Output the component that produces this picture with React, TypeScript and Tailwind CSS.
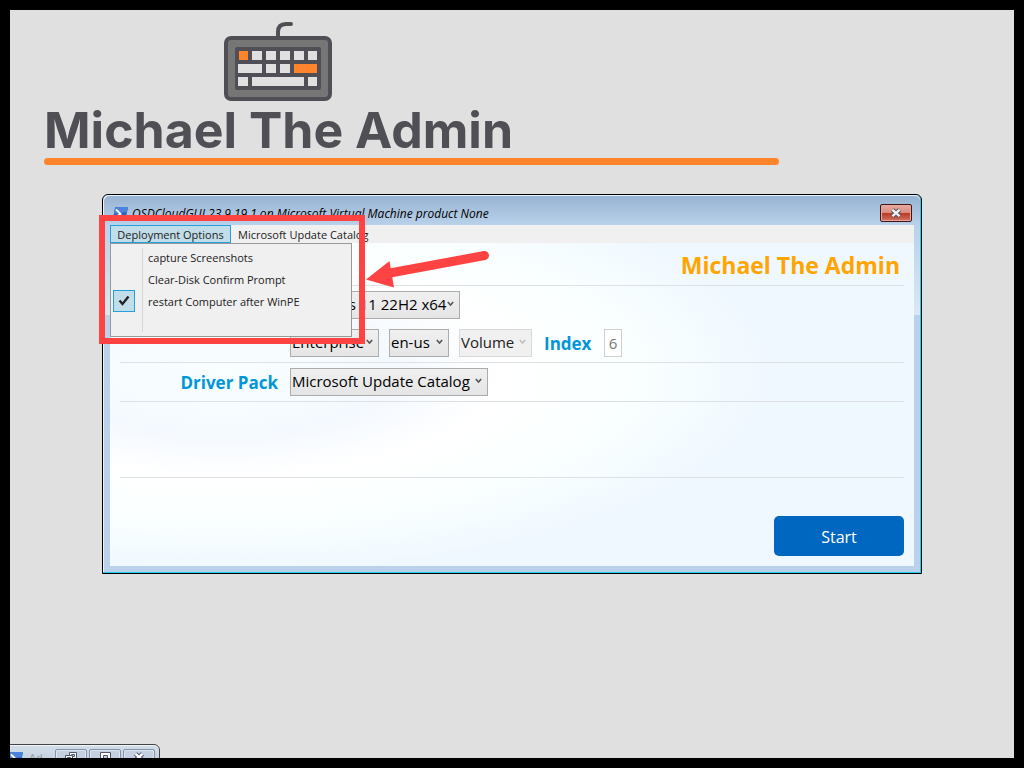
import type { ReactNode, SelectHTMLAttributes } from "react";

function KeyboardLogo() {
  const keys = [
    [239, 51, 9, true],
    [252, 51, 10, false],
    [266, 51, 10, false],
    [280, 51, 10, false],
    [294, 51, 10, false],
    [308, 51, 9, false],
    [238, 64, 24, false],
    [266, 64, 10, false],
    [280, 64, 10, false],
    [294, 64, 23, true],
    [238, 77, 10, false],
    [252, 77, 52, false],
    [308, 77, 9, false],
  ] as const;
  return (
    <svg width="110" height="80" viewBox="223 22 110 80" aria-hidden="true">
      <path d="M278 37v-5q0-8 8-8h5" fill="none" stroke="#504f55" strokeWidth="4" strokeLinecap="round" />
      <rect x="226" y="38" width="104" height="61" rx="5" fill="#767676" stroke="#504f55" strokeWidth="4" />
      <rect x="235" y="47" width="86" height="43" rx="2" fill="#504f55" />
      {keys.map(([x, y, w, accent]) => (
        <rect key={`${x}-${y}`} x={x} y={y} width={w} height="9" fill={accent ? "#ff842c" : "#e0e0e0"} />
      ))}
    </svg>
  );
}

function PowerShellIcon() {
  return (
    <svg className="shrink-0" width="16" height="14" viewBox="0 0 16 14" aria-hidden="true">
      <path d="M3.2 0H16l-2.8 14H.4z" fill="#2f62c0" />
      <path d="M3.2 0H16l-1 5L1.8 7z" fill="#4b82dc" />
      <path d="M4 2.5l4.5 4.3-6 4.4" fill="none" stroke="#fff" strokeWidth="1.8" />
      <path d="M8 11h4" stroke="#fff" strokeWidth="1.5" />
    </svg>
  );
}

type SelectProps = SelectHTMLAttributes<HTMLSelectElement> & { label: string; value: string; width: string };

function Select({ label, value, width, disabled, id }: SelectProps) {
  return (
    <div className={`relative h-7 ${width}`}>
      <select
        id={id}
        aria-label={label}
        disabled={disabled}
        defaultValue={value}
        className="h-full w-full appearance-none border border-[#acacac] bg-linear-to-b from-[#f0f0f0] to-[#e5e5e5] pb-0.5 pl-px text-[15px] leading-5 text-black disabled:border-[#d9d9d9] disabled:bg-[#f0f0f0] disabled:bg-none disabled:text-[#222] disabled:opacity-100"
      >
        <option>{value}</option>
      </select>
      <svg
        className={`pointer-events-none absolute top-2.5 right-1.5 ${disabled ? "text-[#bfbfbf]" : "text-[#555]"}`}
        width="7"
        height="6"
        viewBox="0 0 7 6"
        aria-hidden="true"
      >
        <path d="M.8 1l2.7 3L6.2 1" fill="none" stroke="currentColor" strokeWidth="1.6" />
      </svg>
    </div>
  );
}

function Row({ children, className }: { children?: ReactNode; className: string }) {
  return <div className={`border-b border-[#dfe1e4] ${className}`}>{children}</div>;
}

function MenuItem({ children, checked = false }: { children: ReactNode; checked?: boolean }) {
  return (
    <button type="button" role="menuitemcheckbox" aria-checked={checked} className="flex h-[22px] w-full items-center text-left">
      <span className="flex w-[37px] shrink-0 pl-0.5">
        {checked && (
          <span className="flex size-[22px] items-center justify-center border border-[#26a0da] bg-[#c0dde9]">
            <svg width="12" height="12" viewBox="0 0 12 12" aria-hidden="true">
              <path d="M1.5 5.5l3 3.5L10.5 1.5" fill="none" stroke="#212121" strokeWidth="2.3" />
            </svg>
          </span>
        )}
      </span>
      <span className="pt-0.5">{children}</span>
    </button>
  );
}

function OptionsMenu() {
  return (
    <div role="menu" className="absolute top-full left-0 z-10 flex h-[94px] w-[242px] flex-col border border-[#999] bg-[#f0f0f0] py-0.5">
      <span className="absolute top-1 bottom-1 left-[31px] w-px bg-[#d7d7d7]" />
      <MenuItem>capture Screenshots</MenuItem>
      <MenuItem>Clear-Disk Confirm Prompt</MenuItem>
      <MenuItem checked>restart Computer after WinPE</MenuItem>
    </div>
  );
}

function CloudWindow() {
  return (
    <section className="absolute top-[184px] left-[92px] w-[820px] rounded-t-md border border-black bg-[#b9d1ea] shadow-[inset_-1px_-1px_0_#1fd0ec,inset_1px_1px_0_#eaf4fc]">
      <header className="mx-px mt-px flex h-[29px] items-center justify-between rounded-t-md bg-linear-to-b from-[#98b4d2] to-[#b9d1ea] px-2">
        <div className="flex items-center gap-1 pt-1.5">
          <PowerShellIcon />
          <h2 className="text-xs leading-4 text-black italic">
            OSDCloudGUI 23.9.19.1 on Microsoft Virtual Machine product None
          </h2>
        </div>
        <button
          type="button"
          aria-label="Close"
          className="mt-1 flex h-[18px] w-8 items-center justify-center rounded-xs border border-[#43131a] bg-[linear-gradient(#e9aaa0,#d98c80_48%,#b93a24_52%,#d07464)] shadow-[inset_0_0_0_1px_#eda79b]"
        >
          <svg width="12" height="10" viewBox="0 0 12 10" aria-hidden="true">
            <path d="M2.5 1.8l7 6.4M9.5 1.8l-7 6.4" stroke="#4c5068" strokeWidth="4.4" />
            <path d="M2.5 1.8l7 6.4M9.5 1.8l-7 6.4" stroke="#f4f4f6" strokeWidth="2.4" />
          </svg>
        </button>
      </header>
      <div className="mx-px mb-px bg-linear-to-b from-[#b9d1ea] to-[#dbe8f5] bg-size-[100%_90px] bg-no-repeat px-1.5">
        <nav className="relative flex h-[18px] bg-[#f0f0f0] text-[11px] leading-4 text-[#212121]">
          <button type="button" aria-expanded="true" className="w-[121px] border border-[#26a0da] bg-[#c0dde9] pt-px whitespace-nowrap">
            Deployment Options
          </button>
          <button type="button" className="px-[7px] pt-px whitespace-nowrap">
            Microsoft Update Catalog
          </button>
          <OptionsMenu />
        </nav>
        <main className="bg-[radial-gradient(ellipse_70%_64%_at_14%_40%,#f9ffff_0%,#f4f9ff_30%,#ffffff_50%,#f9ffff_75%,#eff7ff_100%)] px-2.5 pb-2.5">
          <Row className="flex h-[43px] items-center justify-end pt-0.5 pr-1">
            <h1 className="text-[23px] leading-8 font-bold text-[#ffa500]">Michael The Admin</h1>
          </Row>
          <Row className="flex h-[77px] flex-col justify-center gap-2.5 pl-[170px]">
            <div className="flex">
              <Select label="Operating system" value="Windows 11 22H2 x64" width="w-[170px]" />
            </div>
            <div className="flex items-center gap-2.5">
              <Select label="Edition" value="Enterprise" width="w-[89px]" />
              <Select label="Language" value="en-us" width="w-[60px]" />
              <Select label="Activation" value="Volume" width="w-[73px]" disabled />
              <label htmlFor="index" className="ml-0.5 w-12 pt-0.5 text-[17px] font-bold text-[#0096d8]">
                Index
              </label>
              <input
                id="index"
                defaultValue="6"
                className="ml-0.5 h-7 w-[18px] border border-[#cfcfcf] bg-white text-center text-[15px] text-[#777]"
              />
            </div>
          </Row>
          <Row className="flex h-[39px] items-center gap-3">
            <label htmlFor="driver-pack" className="w-[158px] pt-0.5 text-right text-[17px] font-bold text-[#0096d8]">
              Driver Pack
            </label>
            <Select id="driver-pack" label="Driver Pack" value="Microsoft Update Catalog" width="w-[198px]" />
          </Row>
          <Row className="h-[76px]" />
          <div className="flex justify-end pt-[38px]">
            <button type="button" className="h-10 w-[130px] rounded-[5px] bg-[#0067c0] pt-0.5 text-base text-white">
              Start
            </button>
          </div>
        </main>
      </div>
      <div className="h-1.5" />
    </section>
  );
}

function Callout() {
  return (
    <svg className="pointer-events-none absolute top-[200px] left-[86px] z-20" width="400" height="140" viewBox="96 210 400 140" aria-hidden="true">
      <rect x="102" y="218" width="260" height="123" fill="none" stroke="#ff4242" strokeWidth="6" />
      <path d="M390 273L484.5 255.5" stroke="#ff4242" strokeWidth="9" strokeLinecap="round" />
      <path d="M366 279.5L389.5 261L394 287.5z" fill="#ff4242" />
    </svg>
  );
}

function WindowButton({ label, children }: { label: string; children: ReactNode }) {
  return (
    <button
      type="button"
      aria-label={label}
      className="flex h-[18px] w-8 justify-center rounded-xs border border-[#8291a8] bg-[#c2d0df] pt-0.5 shadow-[inset_0_0_0_1px_#dce6f0]"
    >
      {children}
    </button>
  );
}

function MinimizedWindow() {
  return (
    <section className="absolute bottom-[-12px] left-[-8px] flex h-[26px] w-[158px] items-start gap-0.5 rounded-t-md border border-[#444] bg-linear-to-b from-[#d3deea] to-[#bccad9] pt-1 pl-1 shadow-[inset_0_1px_0_#f2f6fa]">
      <div className="flex w-[46px] shrink-0 items-start gap-1.5 overflow-hidden pt-[3px] text-[11px] leading-3 text-[#999]">
        <PowerShellIcon />
        <span>Ad…</span>
      </div>
      <WindowButton label="Restore">
        <svg width="12" height="11" viewBox="0 0 12 11" aria-hidden="true">
          <path d="M4.5.5h7v6h-7z" fill="#fff" stroke="#53586c" />
          <path d="M6.5 2.5h3v2h-3z" fill="#c2d0df" stroke="#53586c" />
          <path d="M.5 3.5h7v6h-7z" fill="#fff" stroke="#53586c" />
          <path d="M2.5 5.5h3v2h-3z" fill="#c2d0df" stroke="#53586c" />
        </svg>
      </WindowButton>
      <WindowButton label="Maximize">
        <svg width="11" height="10" viewBox="0 0 11 10" aria-hidden="true">
          <path d="M.5.5h10v9H.5z" fill="#fff" stroke="#53586c" />
          <path d="M3.5 3.5h4v3h-4z" fill="#c2d0df" stroke="#53586c" />
        </svg>
      </WindowButton>
      <WindowButton label="Close">
        <svg width="12" height="10" viewBox="0 0 12 10" aria-hidden="true">
          <path d="M2.5 1.8l7 6.4M9.5 1.8l-7 6.4" stroke="#53586c" strokeWidth="4.4" />
          <path d="M2.5 1.8l7 6.4M9.5 1.8l-7 6.4" stroke="#fff" strokeWidth="2.4" />
        </svg>
      </WindowButton>
    </section>
  );
}

export default function App() {
  return (
    <div className="relative min-h-screen overflow-hidden border-10 border-black bg-[#e0e0e0] font-['Open_Sans','Noto_Sans',sans-serif]">
      <div className="ml-[34px] flex max-w-[735px] flex-col pt-3">
        <div className="ml-[179px]">
          <KeyboardLogo />
        </div>
        <p className="font-['Inter',sans-serif] text-[50px] leading-[56px] font-bold whitespace-nowrap text-[#504f55]">
          Michael The Admin
        </p>
        <span className="h-[7px] rounded-full bg-[#ff842c]" />
      </div>
      <CloudWindow />
      <Callout />
      <MinimizedWindow />
    </div>
  );
}
